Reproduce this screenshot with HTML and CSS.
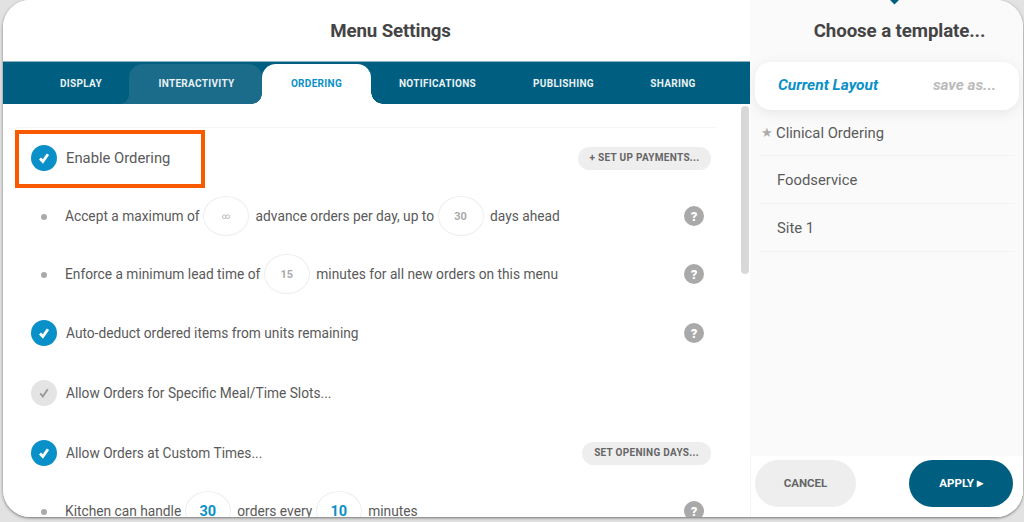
FILE: index.html
```html
<!DOCTYPE html>
<html lang="en">
<head>
<meta charset="utf-8">
<title>Menu Settings</title>
<link rel="stylesheet" href="styles.css">
</head>
<body>
<div class="modal">
  <main class="main">
    <h1 class="title">Menu Settings</h1>
    <nav class="tabs">
      <span class="tab tab-display">DISPLAY</span>
      <span class="tab tab-inter">INTERACTIVITY</span>
      <span class="tab tab-order">ORDERING</span>
      <span class="tab tab-notif">NOTIFICATIONS</span>
      <span class="tab tab-pub">PUBLISHING</span>
      <span class="tab tab-share">SHARING</span>
    </nav>
    <section class="content">
      <div class="rows">
        <div class="row row-first">
          <span class="check on"><svg viewBox="0 0 12 12"><path d="M2.6 6.4 5 9l4.4-6.2"/></svg></span>
          <span class="label">Enable Ordering</span>
          <button class="pill pill-pay">+ SET UP PAYMENTS...</button>
        </div>
        <div class="row row-h">
          <span class="dot"></span>
          <span class="sub">Accept a maximum of</span>
          <span class="num inf">∞</span>
          <span class="sub">advance orders per day, up to</span>
          <span class="num">30</span>
          <span class="sub">days ahead</span>
          <span class="help">?</span>
        </div>
        <div class="row row-h">
          <span class="dot"></span>
          <span class="sub">Enforce a minimum lead time of</span>
          <span class="num">15</span>
          <span class="sub">minutes for all new orders on this menu</span>
          <span class="help">?</span>
        </div>
        <div class="row row-c">
          <span class="check on"><svg viewBox="0 0 12 12"><path d="M2.6 6.4 5 9l4.4-6.2"/></svg></span>
          <span class="label">Auto-deduct ordered items from units remaining</span>
          <span class="help">?</span>
        </div>
        <div class="row row-c">
          <span class="check off"><svg viewBox="0 0 12 12"><path d="M2.8 6.4 5 9l4.2-6.2"/></svg></span>
          <span class="label">Allow Orders for Specific Meal/Time Slots...</span>
        </div>
        <div class="row row-c">
          <span class="check on"><svg viewBox="0 0 12 12"><path d="M2.6 6.4 5 9l4.4-6.2"/></svg></span>
          <span class="label">Allow Orders at Custom Times...</span>
          <button class="pill pill-days">SET OPENING DAYS...</button>
        </div>
        <div class="row row-h row-last">
          <span class="dot"></span>
          <span class="sub">Kitchen can handle</span>
          <span class="num active">30</span>
          <span class="sub">orders every</span>
          <span class="num active">10</span>
          <span class="sub">minutes</span>
          <span class="help">?</span>
        </div>
      </div>
      <div class="scrollbar"></div>
      <div class="highlight"></div>
    </section>
  </main>
  <aside class="side">
    <h2 class="side-title">Choose a template...</h2>
    <div class="current">
      <span class="current-name">Current Layout</span>
      <span class="save">save as...</span>
    </div>
    <ul class="templates">
      <li class="tpl tpl-star"><span class="star">★</span>Clinical Ordering</li>
      <li class="tpl">Foodservice</li>
      <li class="tpl">Site 1</li>
    </ul>
    <div class="footer">
      <button class="btn cancel">CANCEL</button>
      <button class="btn apply">APPLY ▸</button>
    </div>
  </aside>
  <span class="marker"></span>
</div>
</body>
</html>
```
FILE: styles.css
```css
* { box-sizing: border-box; }
html, body { margin: 0; height: 100%; }
body {
  width: 1024px;
  height: 522px;
  overflow: hidden;
  background: #e2e2e2;
  font-family: Roboto, "Liberation Sans", sans-serif;
  color: #555;
  padding: 0 1px 5px 3px;
}
.modal {
  position: relative;
  display: flex;
  height: 517px;
  width: 1020px;
  background: #fff;
  border-radius: 27px;
  box-shadow: 0 1px 3px rgba(0, 0, 0, 0.5);
  overflow: hidden;
}
.main {
  width: 747px;
  display: flex;
  flex-direction: column;
  background: #fff;
}
.title {
  margin: 0;
  height: 61px;
  line-height: 62px;
  text-align: center;
  font-size: 18.7px;
  font-weight: 700;
  color: #444;
  letter-spacing: -0.1px;
  padding-left: 28px;
}
.tabs {
  height: 43px;
  background: #005f80;
  border-top: 1px solid #8ab4c4;
  display: flex;
  align-items: flex-end;
}
.tab {
  height: 40px;
  display: flex;
  align-items: center;
  justify-content: center;
  padding-bottom: 1px;
  font-size: 10px;
  font-weight: 700;
  color: #e9f1f4;
  letter-spacing: 0.32px;
}
.tab-display { width: 126px; padding-left: 30px; }
.tab-inter {
  position: relative;
  width: 133px;
  padding-left: 2px;
  background: #1a6c8a;
  border-radius: 14px 14px 0 0;
}
.tab-inter::before {
  content: "";
  position: absolute;
  right: 100%;
  bottom: 0;
  width: 9px;
  height: 9px;
  background: radial-gradient(circle at 0 0, transparent 8.5px, #1a6c8a 9px);
}
.tab-order {
  position: relative;
  width: 109px;
  background: #fff;
  color: #0a90c8;
  border-radius: 14px 14px 0 0;
}
.tab-order::before,
.tab-order::after {
  content: "";
  position: absolute;
  bottom: 0;
}
.tab-order::before {
  right: 100%;
  width: 10px;
  height: 10px;
  background: radial-gradient(circle at 0 0, transparent 9.5px, #fff 10px);
}
.tab-order::after {
  left: 100%;
  width: 12px;
  height: 12px;
  background: radial-gradient(circle at 100% 0, transparent 11.5px, #fff 12px);
}
.tab-notif { width: 133px; }
.tab-pub { width: 119px; }
.tab-share { width: 100px; }
.content {
  position: relative;
  flex: 1;
  min-height: 0;
  overflow: hidden;
}
.rows {
  width: 701px;
  margin: 23px 0 0 12px;
  border-top: 1px solid #f6f6f6;
  padding-top: 1px;
}
.row {
  height: 58px;
  display: flex;
  align-items: center;
  padding-left: 16px;
  font-size: 13.73px;
}
.row-c { height: 60px; }
.row-h { padding-left: 26px; }
.row-last { height: 56px; }
.label { margin-left: 9px; color: #5a5a5a; padding-bottom: 1px; }
.row-first .label { font-size: 14.8px; }
.sub { color: #5a5a5a; font-size: 13.75px; }
.check {
  width: 26px;
  height: 26px;
  border-radius: 50%;
  display: flex;
  align-items: center;
  justify-content: center;
  flex: none;
}
.check svg { width: 14px; height: 14px; fill: none; stroke-width: 2.4; }
.check.on { background: #0a90c8; }
.check.on svg { stroke: #fff; }
.check.off { background: #e4e4e4; }
.check.off svg { stroke: #999; stroke-width: 1.6; }
.dot {
  width: 6px;
  height: 6px;
  border-radius: 50%;
  background: #aaa;
  margin-right: 18px;
  margin-top: 2px;
  flex: none;
}
.num {
  width: 46px;
  height: 40px;
  border-radius: 50%;
  border: 1px solid #eee;
  display: flex;
  align-items: center;
  justify-content: center;
  margin: 0 6.5px 0 3.5px;
  font-size: 11px;
  font-weight: 700;
  color: #aaa;
  flex: none;
}
.num.inf { font-weight: 400; font-size: 8px; }
.num.active { color: #0a90c8; font-size: 14.5px; }
.help {
  margin-left: auto;
  margin-right: 12px;
  width: 20px;
  height: 20px;
  border-radius: 50%;
  background: #a9a9a9;
  color: #fff;
  font-size: 13px;
  font-weight: 900;
  display: flex;
  align-items: center;
  justify-content: center;
  flex: none;
}
.pill {
  margin-left: auto;
  border: 0;
  height: 23px;
  border-radius: 12px;
  background: #eee;
  color: #666;
  font-family: inherit;
  font-size: 10px;
  font-weight: 700;
  letter-spacing: 0.3px;
  padding: 0 0 2px;
  margin-right: 5px;
}
.pill-pay { width: 133px; }
.pill-days { width: 129px; }
.scrollbar {
  position: absolute;
  right: 1px;
  top: 2px;
  width: 8px;
  height: 168px;
  border-radius: 4px;
  background: #d8d8d8;
}
.highlight {
  position: absolute;
  left: 12px;
  top: 26px;
  width: 190px;
  height: 58px;
  border: 4px solid #f95a00;
}
.side {
  flex: 1;
  display: flex;
  flex-direction: column;
  background: #fafafa;
  min-width: 0;
}
.side-title {
  margin: 0;
  height: 62px;
  line-height: 62px;
  text-align: center;
  padding-left: 26px;
  font-size: 18.7px;
  font-weight: 700;
  color: #444;
  letter-spacing: -0.1px;
}
.current {
  height: 48px;
  margin: 0 4px 0 5px;
  background: #fff;
  border-radius: 16px;
  box-shadow: 0 3px 14px rgba(0, 0, 0, 0.08);
  display: flex;
  align-items: center;
  justify-content: space-between;
  padding: 0 23px 3px;
  font-size: 15.5px;
  font-weight: 700;
  font-style: italic;
  position: relative;
}
.current-name { color: #0a90c8; }
.save { color: #bbb; font-size: 15.3px; }
.templates {
  list-style: none;
  margin: 0;
  padding: 0 8px 0 9px;
  flex: 1;
}
.tpl {
  height: 48px;
  border-bottom: 1px solid #f3f3f3;
  display: flex;
  align-items: center;
  padding: 1px 0 0 18px;
  font-size: 14.8px;
  color: #5a5a5a;
}
.tpl-star { height: 46px; padding: 0 0 0 2px; }
.star { color: #aaa; font-size: 13px; width: 15px; }
.footer {
  height: 61px;
  background: #fff;
  border-left: 1px solid #f4f4f4;
  display: flex;
  align-items: flex-start;
  justify-content: space-between;
  padding: 4px 10px 0 4px;
}
.btn {
  border: 0;
  height: 47px;
  border-radius: 24px;
  font-family: inherit;
  font-size: 11.5px;
  font-weight: 700;
  padding: 0 0 2px;
}
.cancel { width: 101px; background: #eee; color: #666; }
.apply { width: 104px; background: #005f80; color: #fff; }
.marker {
  position: absolute;
  left: 888px;
  top: -4px;
  width: 7px;
  height: 7px;
  background: #005f80;
  transform: rotate(45deg);
}
```
